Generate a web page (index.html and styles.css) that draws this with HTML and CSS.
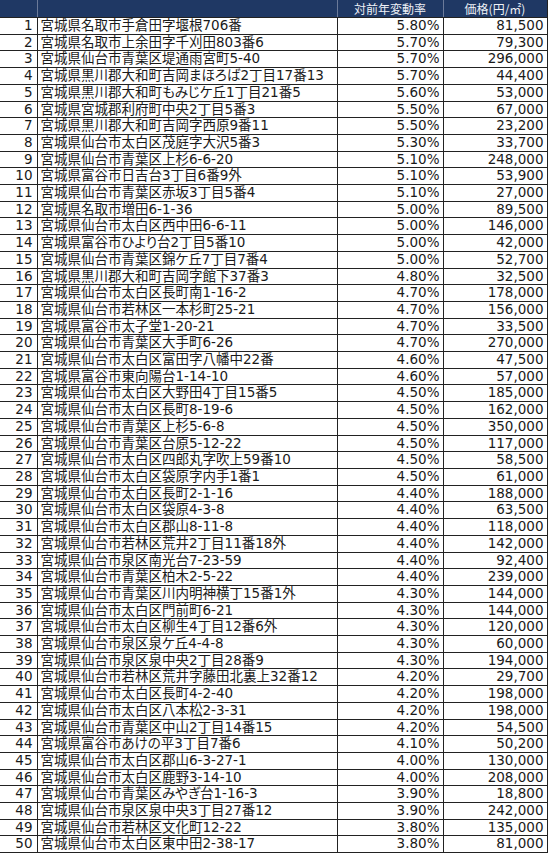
FILE: index.html
```html
<!DOCTYPE html>
<html lang="ja">
<head>
<meta charset="utf-8">
<title>宮城県 地価変動率</title>
<link rel="stylesheet" href="styles.css">
</head>
<body>
<table class="price-table">
<colgroup>
<col class="c-no"><col class="c-addr"><col class="c-rate"><col class="c-price">
</colgroup>
<thead>
<tr><th></th><th></th><th class="h-rate">対前年変動率</th><th class="h-price">価格(円/㎡)</th></tr>
</thead>
<tbody>
<tr><td class="no">1</td><td class="addr">宮城県名取市手倉田字堰根706番</td><td class="num">5.80%</td><td class="num">81,500</td></tr>
<tr><td class="no">2</td><td class="addr">宮城県名取市上余田字千刈田803番6</td><td class="num">5.70%</td><td class="num">79,300</td></tr>
<tr><td class="no">3</td><td class="addr">宮城県仙台市青葉区堤通雨宮町5-40</td><td class="num">5.70%</td><td class="num">296,000</td></tr>
<tr><td class="no">4</td><td class="addr">宮城県黒川郡大和町吉岡まほろば2丁目17番13</td><td class="num">5.70%</td><td class="num">44,400</td></tr>
<tr><td class="no">5</td><td class="addr">宮城県黒川郡大和町もみじケ丘1丁目21番5</td><td class="num">5.60%</td><td class="num">53,000</td></tr>
<tr><td class="no">6</td><td class="addr">宮城県宮城郡利府町中央2丁目5番3</td><td class="num">5.50%</td><td class="num">67,000</td></tr>
<tr><td class="no">7</td><td class="addr">宮城県黒川郡大和町吉岡字西原9番11</td><td class="num">5.50%</td><td class="num">23,200</td></tr>
<tr><td class="no">8</td><td class="addr">宮城県仙台市太白区茂庭字大沢5番3</td><td class="num">5.30%</td><td class="num">33,700</td></tr>
<tr><td class="no">9</td><td class="addr">宮城県仙台市青葉区上杉6-6-20</td><td class="num">5.10%</td><td class="num">248,000</td></tr>
<tr><td class="no">10</td><td class="addr">宮城県富谷市日吉台3丁目6番9外</td><td class="num">5.10%</td><td class="num">53,900</td></tr>
<tr><td class="no">11</td><td class="addr">宮城県仙台市青葉区赤坂3丁目5番4</td><td class="num">5.10%</td><td class="num">27,000</td></tr>
<tr><td class="no">12</td><td class="addr">宮城県名取市増田6-1-36</td><td class="num">5.00%</td><td class="num">89,500</td></tr>
<tr><td class="no">13</td><td class="addr">宮城県仙台市太白区西中田6-6-11</td><td class="num">5.00%</td><td class="num">146,000</td></tr>
<tr><td class="no">14</td><td class="addr">宮城県富谷市ひより台2丁目5番10</td><td class="num">5.00%</td><td class="num">42,000</td></tr>
<tr><td class="no">15</td><td class="addr">宮城県仙台市青葉区錦ケ丘7丁目7番4</td><td class="num">5.00%</td><td class="num">52,700</td></tr>
<tr><td class="no">16</td><td class="addr">宮城県黒川郡大和町吉岡字館下37番3</td><td class="num">4.80%</td><td class="num">32,500</td></tr>
<tr><td class="no">17</td><td class="addr">宮城県仙台市太白区長町南1-16-2</td><td class="num">4.70%</td><td class="num">178,000</td></tr>
<tr><td class="no">18</td><td class="addr">宮城県仙台市若林区一本杉町25-21</td><td class="num">4.70%</td><td class="num">156,000</td></tr>
<tr><td class="no">19</td><td class="addr">宮城県富谷市太子堂1-20-21</td><td class="num">4.70%</td><td class="num">33,500</td></tr>
<tr><td class="no">20</td><td class="addr">宮城県仙台市青葉区大手町6-26</td><td class="num">4.70%</td><td class="num">270,000</td></tr>
<tr><td class="no">21</td><td class="addr">宮城県仙台市太白区富田字八幡中22番</td><td class="num">4.60%</td><td class="num">47,500</td></tr>
<tr><td class="no">22</td><td class="addr">宮城県富谷市東向陽台1-14-10</td><td class="num">4.60%</td><td class="num">57,000</td></tr>
<tr><td class="no">23</td><td class="addr">宮城県仙台市太白区大野田4丁目15番5</td><td class="num">4.50%</td><td class="num">185,000</td></tr>
<tr><td class="no">24</td><td class="addr">宮城県仙台市太白区長町8-19-6</td><td class="num">4.50%</td><td class="num">162,000</td></tr>
<tr><td class="no">25</td><td class="addr">宮城県仙台市青葉区上杉5-6-8</td><td class="num">4.50%</td><td class="num">350,000</td></tr>
<tr><td class="no">26</td><td class="addr">宮城県仙台市青葉区台原5-12-22</td><td class="num">4.50%</td><td class="num">117,000</td></tr>
<tr><td class="no">27</td><td class="addr">宮城県仙台市太白区四郎丸字吹上59番10</td><td class="num">4.50%</td><td class="num">58,500</td></tr>
<tr><td class="no">28</td><td class="addr">宮城県仙台市太白区袋原字内手1番1</td><td class="num">4.50%</td><td class="num">61,000</td></tr>
<tr><td class="no">29</td><td class="addr">宮城県仙台市太白区長町2-1-16</td><td class="num">4.40%</td><td class="num">188,000</td></tr>
<tr><td class="no">30</td><td class="addr">宮城県仙台市太白区袋原4-3-8</td><td class="num">4.40%</td><td class="num">63,500</td></tr>
<tr><td class="no">31</td><td class="addr">宮城県仙台市太白区郡山8-11-8</td><td class="num">4.40%</td><td class="num">118,000</td></tr>
<tr><td class="no">32</td><td class="addr">宮城県仙台市若林区荒井2丁目11番18外</td><td class="num">4.40%</td><td class="num">142,000</td></tr>
<tr><td class="no">33</td><td class="addr">宮城県仙台市泉区南光台7-23-59</td><td class="num">4.40%</td><td class="num">92,400</td></tr>
<tr><td class="no">34</td><td class="addr">宮城県仙台市青葉区柏木2-5-22</td><td class="num">4.40%</td><td class="num">239,000</td></tr>
<tr><td class="no">35</td><td class="addr">宮城県仙台市青葉区川内明神横丁15番1外</td><td class="num">4.30%</td><td class="num">144,000</td></tr>
<tr><td class="no">36</td><td class="addr">宮城県仙台市太白区門前町6-21</td><td class="num">4.30%</td><td class="num">144,000</td></tr>
<tr><td class="no">37</td><td class="addr">宮城県仙台市太白区柳生4丁目12番6外</td><td class="num">4.30%</td><td class="num">120,000</td></tr>
<tr><td class="no">38</td><td class="addr">宮城県仙台市泉区泉ケ丘4-4-8</td><td class="num">4.30%</td><td class="num">60,000</td></tr>
<tr><td class="no">39</td><td class="addr">宮城県仙台市泉区泉中央2丁目28番9</td><td class="num">4.30%</td><td class="num">194,000</td></tr>
<tr><td class="no">40</td><td class="addr">宮城県仙台市若林区荒井字藤田北裏上32番12</td><td class="num">4.20%</td><td class="num">29,700</td></tr>
<tr><td class="no">41</td><td class="addr">宮城県仙台市太白区長町4-2-40</td><td class="num">4.20%</td><td class="num">198,000</td></tr>
<tr><td class="no">42</td><td class="addr">宮城県仙台市太白区八本松2-3-31</td><td class="num">4.20%</td><td class="num">198,000</td></tr>
<tr><td class="no">43</td><td class="addr">宮城県仙台市青葉区中山2丁目14番15</td><td class="num">4.20%</td><td class="num">54,500</td></tr>
<tr><td class="no">44</td><td class="addr">宮城県富谷市あけの平3丁目7番6</td><td class="num">4.10%</td><td class="num">50,200</td></tr>
<tr><td class="no">45</td><td class="addr">宮城県仙台市太白区郡山6-3-27-1</td><td class="num">4.00%</td><td class="num">130,000</td></tr>
<tr><td class="no">46</td><td class="addr">宮城県仙台市太白区鹿野3-14-10</td><td class="num">4.00%</td><td class="num">208,000</td></tr>
<tr><td class="no">47</td><td class="addr">宮城県仙台市青葉区みやぎ台1-16-3</td><td class="num">3.90%</td><td class="num">18,800</td></tr>
<tr><td class="no">48</td><td class="addr">宮城県仙台市泉区泉中央3丁目27番12</td><td class="num">3.90%</td><td class="num">242,000</td></tr>
<tr><td class="no">49</td><td class="addr">宮城県仙台市若林区文化町12-22</td><td class="num">3.80%</td><td class="num">135,000</td></tr>
<tr><td class="no">50</td><td class="addr">宮城県仙台市太白区東中田2-38-17</td><td class="num">3.80%</td><td class="num">81,000</td></tr>
</tbody>
</table>
</body>
</html>
```
FILE: styles.css
```css
html, body {
  margin: 0;
  padding: 0;
  background: #ffffff;
}

body {
  font-family: "DejaVu Sans", "Noto Sans CJK JP", sans-serif;
  color: #1a1a1a;
}

.price-table {
  border-collapse: collapse;
  table-layout: fixed;
  width: 547px;
  font-size: 13.5px;
}

.c-no { width: 37px; }
.c-addr { width: 300px; }
.c-rate { width: 106px; }
.c-price { width: 104px; }

.price-table th {
  height: 17px;
  padding: 0;
  background: #1f3864;
  color: #eef1f6;
  font-weight: normal;
  font-family: "Noto Sans CJK JP", sans-serif;
  font-size: 12px;
  line-height: 16px;
  text-align: center;
  border-left: 1px solid #6b7a99;
  border-bottom: 1px solid #222;
  white-space: nowrap;
}

.price-table th:first-child {
  border-left: none;
}

.price-table th:last-child {
  border-right: 1px solid #222;
}

.price-table td {
  height: 15.7px;
  padding: 0;
  line-height: 15.7px;
  border: 1px solid #222;
  white-space: nowrap;
}

.price-table td:first-child {
  border-left: none;
}

.no {
  text-align: right;
  padding-right: 4px !important;
}

.addr {
  text-align: left;
  padding-left: 3px !important;
  font-feature-settings: "palt" 1;
}

.num {
  text-align: right;
  padding-right: 3px !important;
}
```
